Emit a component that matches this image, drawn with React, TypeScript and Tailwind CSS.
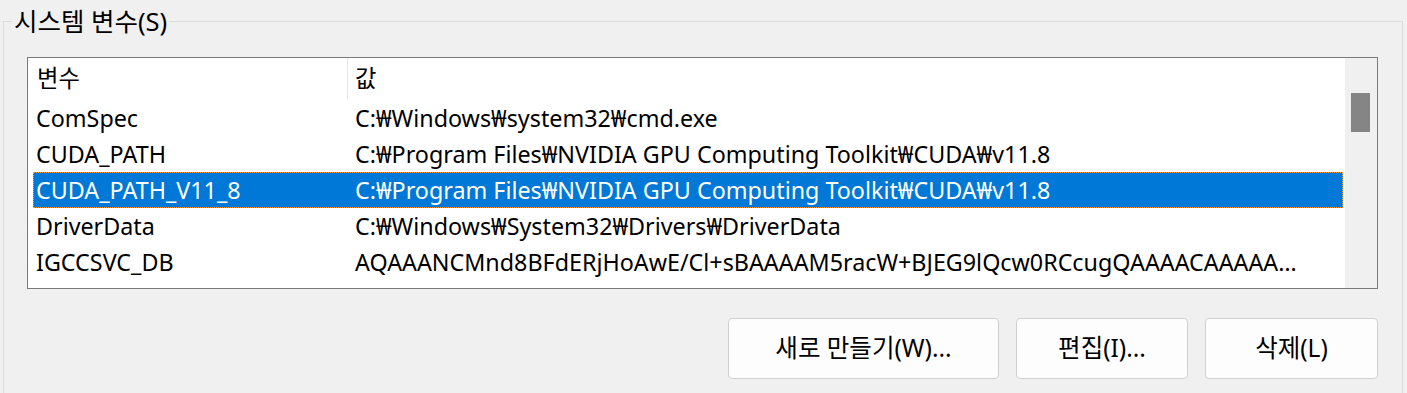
import React from 'react';

const rows = [
  { name: 'ComSpec', value: 'C:₩Windows₩system32₩cmd.exe' },
  { name: 'CUDA_PATH', value: 'C:₩Program Files₩NVIDIA GPU Computing Toolkit₩CUDA₩v11.8' },
  { name: 'CUDA_PATH_V11_8', value: 'C:₩Program Files₩NVIDIA GPU Computing Toolkit₩CUDA₩v11.8', selected: true },
  { name: 'DriverData', value: 'C:₩Windows₩System32₩Drivers₩DriverData' },
  {
    name: 'IGCCSVC_DB',
    value: 'AQAAANCMnd8BFdERjHoAwE/Cl+sBAAAAM5racW+BJEG9lQcw0RCcugQAAAACAAAAAAAQZgAAAAEAACAAAAB',
  },
];

export default function App() {
  return (
    <div
      className="w-[1407px] h-[393px] bg-[#f0f0f0] overflow-hidden text-[23.3px] text-black"
      style={{ fontFamily: '"Noto Sans", "Noto Sans CJK KR", sans-serif' }}
    >
      {/* System variables group */}
      <div className="relative ml-[3px] mt-[21px] w-[1400px] h-[400px] border border-[#dcdcdc] pl-[23px] pr-[24px] pt-[35px]">
        <div className="absolute left-[8px] -top-[17px] bg-[#f0f0f0] px-[2px] leading-[32px] text-[25.5px]">시스템 변수(S)</div>

        {/* List view */}
        <div className="flex h-[232px] w-[1351px] border border-[#7a7a7a] bg-white">
          <div className="flex flex-1 flex-col min-w-0">
            <div className="flex h-[42px] shrink-0">
              <div className="w-[320px] pl-[9px] pt-[5px] leading-[30px] border-r border-[#e5e5e5] mb-[1px]">변수</div>
              <div className="flex-1 pl-[7px] pt-[5px] leading-[30px]">값</div>
            </div>
            {rows.map((r) => (
              <div
                key={r.name}
                className={`flex h-[36px] ml-[5px] items-center ${r.selected ? 'bg-[#0078d7] text-white outline-1 outline-dotted outline-[#ff9a2e] -outline-offset-1' : ''}`}
              >
                <div className="w-[315px] pl-[3px] whitespace-nowrap">{r.name}</div>
                <div className="flex-1 min-w-0 pl-[7px] pr-[34px] whitespace-nowrap overflow-hidden text-ellipsis">{r.value}</div>
              </div>
            ))}
          </div>
          {/* Scrollbar */}
          <div className="w-[34px] shrink-0 bg-[#f0f0f0] border-l-2 border-white pt-[35px] pl-[6px]">
            <div className="w-[19px] h-[39px] bg-[#858585]" />
          </div>
        </div>

        {/* Buttons */}
        <div className="flex justify-end gap-[17px] mt-[29px] text-[24.5px]">
          <button className="w-[271px] h-[61px] rounded-[4px] border border-[#d0d0d0] bg-[#fdfdfd]">새로 만들기(W)...</button>
          <button className="w-[172px] h-[61px] rounded-[4px] border border-[#d0d0d0] bg-[#fdfdfd]">편집(I)...</button>
          <button className="w-[173px] h-[61px] rounded-[4px] border border-[#d0d0d0] bg-[#fdfdfd]">삭제(L)</button>
        </div>
      </div>
    </div>
  );
}
